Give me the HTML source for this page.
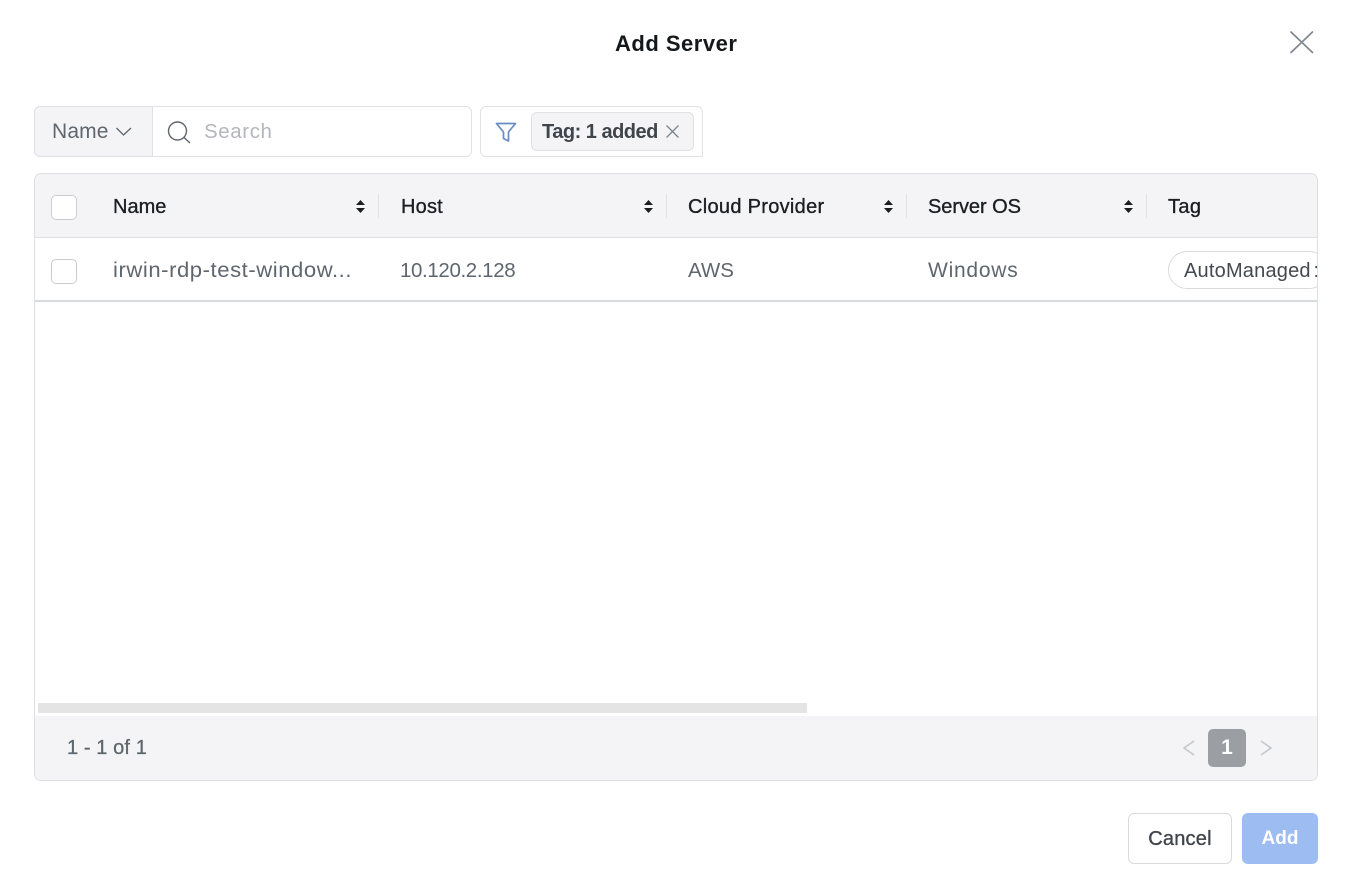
<!DOCTYPE html>
<html><head><meta charset="utf-8"><style>
html,body{margin:0;padding:0;background:#fff}
#p{position:relative;width:1348px;height:886px;overflow:hidden;background:#fff;font-family:"Liberation Sans",sans-serif}
#p div,#p span.t{position:absolute;box-sizing:border-box}
.t{white-space:nowrap;line-height:24px;height:24px}
.h{font-size:20px;color:#1b1f23;-webkit-text-stroke:.35px #1b1f23}
.b{font-size:20.5px;color:#5f666d}
.cb{width:26px;height:25px;background:#fff;border:1px solid #c9ccd1;border-radius:5px}
svg{position:absolute;overflow:visible}
</style></head><body><div id="p">
<span class="t" style="left:615px;top:32px;font-size:22px;font-weight:bold;color:#15181b;letter-spacing:.5px">Add Server</span>
<svg style="left:0;top:0" width="1348" height="886" fill="none">
<path d="M1290.500 31.500L1313 53M1313 31.500L1290.500 53" stroke="#7f878f" stroke-width="1.700"/>
</svg>

<div style="left:34px;top:106px;width:438px;height:51px;border:1px solid #dfe1e5;border-radius:6px;background:#fff"></div>
<div style="left:34px;top:106px;width:119px;height:51px;border:1px solid #dfe1e5;border-radius:6px 0 0 6px;background:#f4f4f6"></div>
<span class="t b" style="left:52px;top:120px;font-size:21px;letter-spacing:.15px">Name</span>
<span class="t" style="left:204px;top:120px;font-size:20.500px;letter-spacing:.6px;color:#b3b7bd">Search</span>

<div style="left:480px;top:106px;width:223px;height:51px;border:1px solid #dfe1e5;border-radius:6px 6px 0 6px;background:#fff"></div>
<div style="left:531px;top:112px;width:163px;height:39px;border:1px solid #dfe1e5;border-radius:6px;background:#f4f4f6"></div>
<span class="t" style="left:542px;top:120px;font-size:20px;font-weight:bold;color:#3f454b;letter-spacing:-.5px">Tag: 1 added</span>
<svg style="left:0;top:0" width="1348" height="886" fill="none">
<path d="M116.500 128L123.500 135L131 128" stroke="#5f666d" stroke-width="1.300"/>
<circle cx="177.500" cy="131" r="9" stroke="#5f666d" stroke-width="1.400"/>
<path d="M184 137.500L190 143" stroke="#5f666d" stroke-width="1.400"/>
<path d="M496.500 123.500H515.500L508.500 132V141L503.500 138.500V132Z" stroke="#6a8cc4" stroke-width="1.700" stroke-linejoin="round"/>
<path d="M666.500 125.500L678.500 137.500M678.500 125.500L666.500 137.500" stroke="#7b838b" stroke-width="1.300"/>
</svg>

<div style="left:34px;top:173px;width:1284px;height:608px;border:1px solid #dddfe3;border-radius:7px;background:#fff;overflow:hidden">
  <div style="left:0;top:0;width:1282px;height:64px;background:#f4f4f6;border-bottom:1px solid #dddfe3"></div>
  <div style="left:0;top:126px;width:1282px;height:2px;background:#d8dbde"></div>
  <div style="left:3px;top:529px;width:769px;height:10px;background:#e4e4e4;border-radius:1px"></div>
  <div style="left:0;top:542px;width:1282px;height:64px;background:#f4f4f6"></div>
  <div style="left:1133px;top:77px;width:160px;height:38px;border:1px solid #d8dade;border-radius:19px;background:#fff"></div>
</div>

<div class="cb" style="left:51px;top:195px"></div>
<div class="cb" style="left:51px;top:259px"></div>

<span class="t h" style="left:113px;top:195px">Name</span>
<span class="t h" style="left:401px;top:195px;letter-spacing:.2px">Host</span>
<span class="t h" style="left:688px;top:195px;letter-spacing:.3px">Cloud Provider</span>
<span class="t h" style="left:928px;top:195px;letter-spacing:-.05px">Server OS</span>
<span class="t h" style="left:1168px;top:195px;letter-spacing:.4px">Tag</span>

<svg style="left:0;top:0" width="1348" height="886">
<g fill="#1b1f23">
<path d="M356 205L360.500 200L365 205ZM356 208L360.500 213L365 208Z"/>
<path d="M644 205L648.500 200L653 205ZM644 208L648.500 213L653 208Z"/>
<path d="M884 205L888.500 200L893 205ZM884 208L888.500 213L893 208Z"/>
<path d="M1124 205L1128.500 200L1133 205ZM1124 208L1128.500 213L1133 208Z"/>
</g>
<g fill="#e2e3e6">
<rect x="378" y="194" width="1" height="24"/><rect x="666" y="194" width="1" height="24"/><rect x="906" y="194" width="1" height="24"/><rect x="1146" y="194" width="1" height="24"/>
</g>
</svg>

<span class="t b" style="left:113px;top:259px;font-size:21px;letter-spacing:.54px;transform:scaleX(1.05);transform-origin:left center">irwin-rdp-test-window...</span>
<span class="t b" style="left:400px;top:259px;letter-spacing:-.37px">10.120.2.128</span>
<span class="t b" style="left:688px;top:259px">AWS</span>
<span class="t b" style="left:928px;top:259px;font-size:21px;letter-spacing:.75px">Windows</span>
<div style="left:1184px;top:259px;width:133px;height:24px;overflow:hidden"><span class="t" style="position:absolute;left:0;top:0;font-size:20px;color:#44494f;letter-spacing:.2px;word-spacing:-3px">AutoManaged :</span></div>

<span class="t b" style="left:67px;top:736px;font-size:20px;-webkit-text-stroke:.3px #5f666d;letter-spacing:.1px">1 - 1 of 1</span>
<svg style="left:0;top:0" width="1348" height="886" fill="none">
<path d="M1194 741L1184 748L1194 755" stroke="#c4c7cb" stroke-width="1.600"/>
<path d="M1261 741L1271 748L1261 755" stroke="#c4c7cb" stroke-width="1.600"/>
</svg>
<div style="left:1208px;top:729px;width:38px;height:38px;background:#9b9fa3;border-radius:5px"></div>
<span class="t" style="left:1208px;top:736px;width:38px;text-align:center;font-size:21px;font-weight:bold;color:#fff">1</span>

<div style="left:1128px;top:813px;width:104px;height:51px;background:#fff;border:1px solid #d9dbde;border-radius:6px"></div>
<span class="t" style="left:1128px;top:827px;width:104px;text-align:center;font-size:20px;color:#3f454b;-webkit-text-stroke:.35px #3f454b;letter-spacing:.2px">Cancel</span>
<div style="left:1242px;top:813px;width:76px;height:51px;background:#9dbcf2;border-radius:6px"></div>
<span class="t" style="left:1242px;top:827px;width:76px;text-align:center;font-size:19px;font-weight:bold;color:#fff">Add</span>
</div></body></html>
